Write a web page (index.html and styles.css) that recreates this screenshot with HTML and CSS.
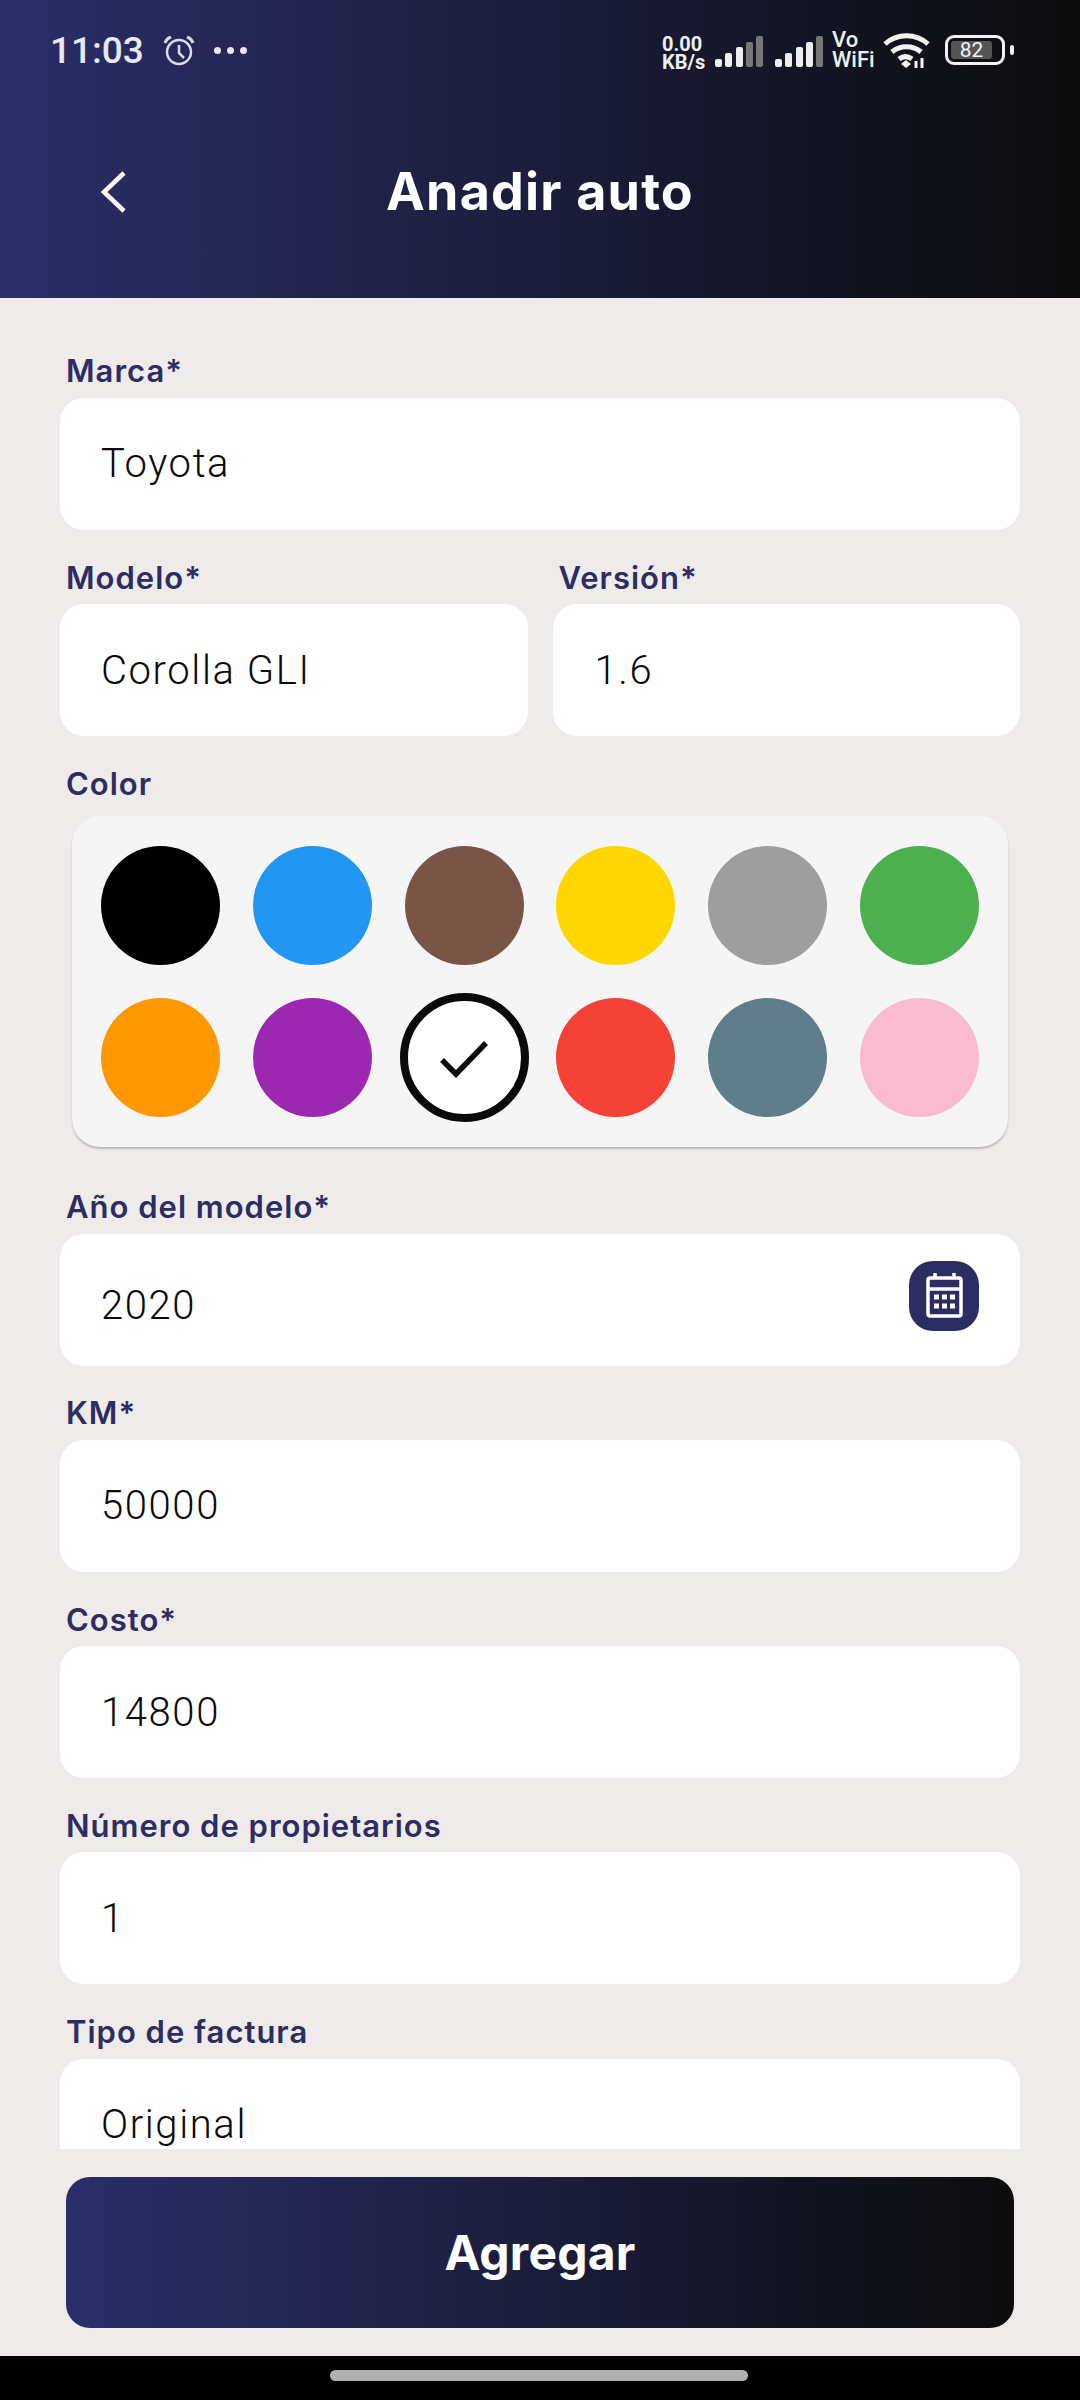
FILE: index.html
```html
<!DOCTYPE html>
<html lang="es">
<head>
    <meta charset="UTF-8">
    <meta name="viewport" content="width=device-width, initial-scale=1.0">
    <title>Anadir auto</title>
    <link rel="stylesheet" href="styles.css">
</head>
<body>
    <div id="app">
        <header class="top">
            <div class="status">
                <span class="time">11:03</span>
                <svg class="alarm" width="32" height="30" viewBox="0 0 32 30" fill="none" stroke="#dcdde8" stroke-width="2.5">
                    <circle cx="16" cy="16" r="12"/>
                    <path d="M16 9v8l5 5"/>
                    <path d="M2 7C3 4 5 2 8 1M30 7c-1-3-3-5-6-6" stroke-width="3"/>
                </svg>
                <span class="dots"><i></i><i></i><i></i></span>
                <span class="speed"><span class="line">0.00</span><span class="line">KB/s</span></span>
                <svg class="signal" width="48" height="32" viewBox="0 0 48 32">
                    <rect x="0" y="23" width="7" height="8" rx="2" fill="#eee"/>
                    <rect x="10" y="17" width="7" height="14" rx="2" fill="#eee"/>
                    <rect x="21" y="11" width="7" height="20" rx="2" fill="#eee"/>
                    <rect x="31" y="6" width="7" height="25" rx="2" fill="#777"/>
                    <rect x="41" y="0" width="7" height="31" rx="2" fill="#777"/>
                </svg>
                <svg class="signal" width="48" height="32" viewBox="0 0 48 32">
                    <rect x="0" y="23" width="7" height="8" rx="2" fill="#eee"/>
                    <rect x="10" y="17" width="7" height="14" rx="2" fill="#eee"/>
                    <rect x="21" y="11" width="7" height="20" rx="2" fill="#eee"/>
                    <rect x="31" y="6" width="7" height="25" rx="2" fill="#eee"/>
                    <rect x="41" y="0" width="7" height="31" rx="2" fill="#777"/>
                </svg>
                <span class="vowifi"><span class="line">Vo</span><span class="line">WiFi</span></span>
                <svg class="wifi" width="47" height="36" viewBox="0 0 47 36" fill="none" stroke="#f2f2f2" stroke-width="5">
                    <path d="M2 11C14 0 33 0 45 11"/>
                    <path d="M9 19c8-7 21-7 29 0"/>
                    <path d="M16 26c4-3 9-3 13 0"/>
                    <path d="M18 31l5-4 5 4-5 4z" fill="#f2f2f2" stroke="none"/>
                    <path d="M33 28v7M39 25v10" stroke-width="3"/>
                </svg>
                <span class="battery"><span class="battery-level">82</span></span>
                <span class="battery-tip"></span>
            </div>
            <div class="titlebar">
                <svg class="back" width="30" height="44" viewBox="0 0 30 44" fill="none" stroke="#fff" stroke-width="4.5">
                    <path d="M26 3 6 22l20 19"/>
                </svg>
                <h1>Anadir auto</h1>
            </div>
        </header>

        <main class="form">
            <div class="field">
                <label>Marca*</label>
                <div class="input">Toyota</div>
            </div>
            <div class="row">
                <div class="field">
                    <label>Modelo*</label>
                    <div class="input">Corolla GLI</div>
                </div>
                <div class="field">
                    <label>Versión*</label>
                    <div class="input input-short">1.6</div>
                </div>
            </div>
            <div class="field field-color">
                <label>Color</label>
                <div class="colors">
                    <span class="swatch" style="background:#000000"></span>
                    <span class="swatch" style="background:#2196f3"></span>
                    <span class="swatch" style="background:#795548"></span>
                    <span class="swatch" style="background:#ffd700"></span>
                    <span class="swatch" style="background:#9e9e9e"></span>
                    <span class="swatch" style="background:#4caf50"></span>
                    <span class="swatch" style="background:#ff9800"></span>
                    <span class="swatch" style="background:#9c27b0"></span>
                    <span class="swatch selected">
                        <svg class="check" width="48" height="38" viewBox="0 0 48 38" fill="none" stroke="#0a0a0a" stroke-width="5.5">
                            <path d="M2 20l14 14L46 3"/>
                        </svg>
                    </span>
                    <span class="swatch" style="background:#f44336"></span>
                    <span class="swatch" style="background:#607d8b"></span>
                    <span class="swatch" style="background:#f8bbd0"></span>
                </div>
            </div>
            <div class="field">
                <label>Año del modelo*</label>
                <div class="input input-date">
                    <span class="date-text">2020</span>
                    <span class="date-btn">
                        <svg width="37" height="45" viewBox="0 0 37 45" fill="none" stroke="#fff" stroke-width="3.5">
                            <rect x="2" y="5" width="33" height="38" rx="2"/>
                            <path d="M2 16h33"/>
                            <path d="M9 0v6M28 0v6"/>
                            <path d="M8 24h5M16 24h5M24 24h5M8 33h5M16 33h5M24 33h5" stroke-width="5"/>
                        </svg>
                    </span>
                </div>
            </div>
            <div class="field">
                <label>KM*</label>
                <div class="input">50000</div>
            </div>
            <div class="field">
                <label>Costo*</label>
                <div class="input">14800</div>
            </div>
            <div class="field">
                <label>Número de propietarios</label>
                <div class="input">1</div>
            </div>
            <div class="field">
                <label>Tipo de factura</label>
                <div class="input">Original</div>
            </div>
        </main>

        <div class="actions">
            <button type="button">Agregar</button>
        </div>
        <div class="navbar"><span class="pill"></span></div>
    </div>
</body>
</html>
```

FILE: styles.css
```css
body{
    margin: 0;
    padding: 0;
    font-family: Roboto, "Liberation Sans", sans-serif;
    background-color: #eeebea;
}
#app{
    width: 1080px;
    height: 2400px;
    display: flex;
    flex-direction: column;
    overflow: hidden;
}
.top{
    height: 298px;
    flex: none;
    background: linear-gradient(90deg, #2b2e69, #0c0c0d);
    color: #fff;
}
.status{
    display: flex;
    align-items: center;
    height: 100px;
    padding-left: 50px;
}
.time{
    font-size: 37px;
    font-weight: 500;
    color: #e8e9f2;
    width: 113px;
}
.alarm{
    margin-top: 2px;
}
.dots{
    display: flex;
    gap: 6px;
    margin-left: 19px;
    margin-right: 415px;
}
.dots i{
    width: 7px;
    height: 7px;
    border-radius: 50%;
    background-color: #e8e8ee;
}
.line{
    display: block;
}
.speed{
    font-size: 20px;
    line-height: 18px;
    font-weight: 700;
    color: #eee;
    width: 53px;
    margin-top: 6px;
}
.signal{
    margin-right: 12px;
    margin-top: 3px;
}
.vowifi{
    font-size: 22px;
    font-weight: 500;
    line-height: 20px;
    color: #eee;
    width: 51px;
    margin-left: -3px;
}
.wifi{
    margin-right: 15px;
    margin-top: 2px;
}
.battery{
    width: 60px;
    height: 30px;
    border: 3px solid #f2f2f2;
    box-sizing: border-box;
    border-radius: 9px;
    padding: 3px;
    display: flex;
}
.battery-level{
    width: 41px;
    background-color: #555;
    border-radius: 3px;
    font-size: 21px;
    line-height: 18px;
    text-align: center;
    color: #f2f2f2;
}
.battery-tip{
    width: 4px;
    height: 10px;
    margin-left: 5px;
    background-color: #f2f2f2;
    border-radius: 2px;
}
.titlebar{
    display: flex;
    align-items: center;
    justify-content: center;
    height: 90px;
    margin-top: 46px;
    position: relative;
}
.back{
    position: absolute;
    left: 98px;
    top: 24px;
}
h1{
    margin: 0;
    font-family: Inter, sans-serif;
    font-size: 52px;
    font-weight: 700;
    letter-spacing: 1.2px;
}
.form{
    flex: 1;
    min-height: 0;
    overflow: hidden;
    padding: 25.5px 60px 0;
}
.field{
    flex: 1;
    min-width: 0;
}
label{
    display: block;
    font-family: Inter, sans-serif;
    font-size: 31px;
    font-weight: 600;
    letter-spacing: 1px;
    color: #2b2d63;
    height: 60px;
    line-height: 40px;
    padding-top: 13.5px;
    padding-left: 6px;
    box-sizing: border-box;
    margin-top: 14.25px;
}
.input{
    height: 132px;
    background-color: #fff;
    border-radius: 24px;
    padding: 0 41px;
    display: flex;
    align-items: center;
    font-size: 40px;
    font-weight: 300;
    letter-spacing: 1.6px;
    color: #0a0a0a;
}
.input-short{
    padding-left: 42px;
}
.input-date{
    justify-content: space-between;
}
.date-text{
    margin-top: 12px;
}
.date-btn{
    width: 70px;
    height: 70px;
    border-radius: 24px;
    background-color: #2b2d63;
    display: flex;
    align-items: center;
    justify-content: center;
    margin-top: -8px;
}
.row{
    display: flex;
    gap: 25px;
}
.field-color{
    padding-bottom: 12px;
}
.field-color label{
    height: 66px;
}
.colors{
    margin: 0 12px;
    padding: 30px 29px;
    background-color: #f5f5f5;
    border-radius: 28px;
    box-shadow: 0 2px 2px rgba(0, 0, 0, 0.22);
    display: grid;
    grid-template-columns: repeat(6, 119px);
    justify-content: space-between;
    row-gap: 33px;
}
.swatch{
    width: 119px;
    height: 119px;
    border-radius: 50%;
    display: flex;
    align-items: center;
    justify-content: center;
}
.selected{
    background-color: #fff;
    outline: 8px solid #0a0a0a;
    outline-offset: -3px;
}
.check{
    margin-top: 3px;
}
.actions{
    flex: none;
    height: 207px;
    padding: 28px 66px 0;
    box-sizing: border-box;
}
button{
    width: 100%;
    height: 151px;
    border: none;
    border-radius: 24px;
    background: linear-gradient(90deg, #2b2e69, #0c0c0d);
    color: #fff;
    font-family: Inter, sans-serif;
    font-size: 48px;
    font-weight: 700;
    letter-spacing: 0.2px;
}
.navbar{
    flex: none;
    height: 44px;
    box-sizing: border-box;
    background-color: #000;
    display: flex;
    justify-content: center;
    padding-top: 14px;
    padding-right: 3px;
}
.pill{
    width: 418px;
    height: 11px;
    border-radius: 6px;
    background-color: #b0b0b0;
}
```
